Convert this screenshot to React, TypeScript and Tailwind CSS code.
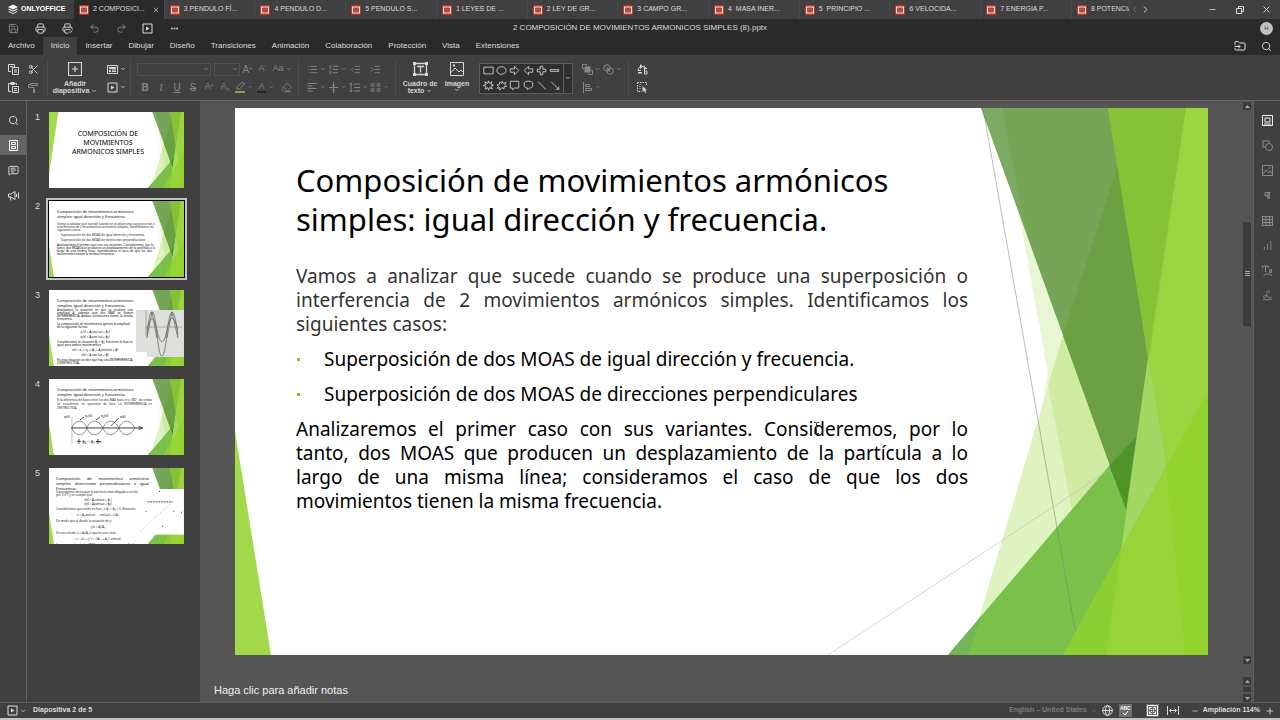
import type { ReactNode } from 'react'
import {
  ChartNoAxesColumnIncreasing, ChevronDown, ChevronLeft, ChevronRight, Ellipsis, Eraser, FolderInput,
  IndentDecrease, IndentIncrease, List, ListOrdered, MessageSquareText, Minus, Pilcrow, Plus, Printer,
  PrinterCheck, Redo2, Save, Scissors, Search, Signature, Undo2, X,
} from 'lucide-react'

const fileTabs = [
  '2 COMPOSICI...', '3 PENDULO FÍ...', '4 PENDULO D...', '5 PENDULO S...', '1 LEYES DE ...', '2 LEY DE GR...',
  '3 CAMPO GR...', '4  MASA INER...', '5  PRINCIPIO ...', '6 VELOCIDA...', '7 ENERGIA P...', '8 POTENCIA',
]

const menuTabs = [
  'Archivo', 'Inicio', 'Insertar', 'Dibujar', 'Diseño', 'Transiciones', 'Animación', 'Colaboración',
  'Protección', 'Vista', 'Extensiones',
]

const i11 = 'w-[11px] h-[11px]'

const Logo = () => (
  <svg className="w-[10px] h-[11px]" viewBox="0 0 20 22" aria-hidden="true">
    <path d="M10 1 20 6 10 11 0 6Z" fill="#fff" />
    <path d="M2.500 9 10 12.800 17.500 9 20 10.300 10 15.500 0 10.300Z" fill="#ddd" />
    <path d="M2.500 14 10 17.800 17.500 14 20 15.300 10 20.500 0 15.300Z" fill="#bbb" />
  </svg>
)

const SlideFileIcon = () => (
  <svg className="w-[10px] h-[10px] shrink-0" viewBox="0 0 10 10" aria-hidden="true">
    <rect width="10" height="10" rx="1" fill="#b5392c" />
    <rect x="1.500" y="2" width="7" height="6" fill="#b9493d" stroke="#f3dedb" />
  </svg>
)

// 11px line icon drawn on an 11x11 grid
const Glyph = ({ d, fill, children }: { d?: string; fill?: string; children?: ReactNode }) => (
  <svg className="w-[11px] h-[11px] shrink-0" viewBox="0 0 11 11" aria-hidden="true">
    {d && <path d={d} fill="none" stroke="currentColor" />}
    {fill && <path d={fill} fill="currentColor" />}
    {children}
  </svg>
)

const PlayBox = () => <Glyph d="M1 1h9v9H1Z" fill="M4 3.500v4l3.500-2Z" />
const LayoutBox = () => <Glyph d="M.5 1.500h10v8H.5ZM5 7.500h4M5 6h4" fill="M2 3h7v2H2ZM2 6h2v2H2Z" />
const CopyIcon = () => <Glyph d="M3 7.500H.5v-7h6V3M4.500 3.500h6v7h-6Z" fill="M2 2h3v1H2ZM6 5.500h3v1H6ZM6 7.500h3v1H6Z" />
const PasteIcon = () => <Glyph d="M3 9.500H.5v-8h8V3M4.500 4.500h6v6h-6Z" fill="M2.500 0h4v3h-4ZM6 6h3v1H6ZM6 8h3v1H6Z" />
const FormatPainter = () => <Glyph d="M2.500 1.500h7v2h-7ZM2.500 2.500h-2v3H6V7" fill="M5 7h2v4H5Z" />
const AlignLeftIcon = () => <Glyph d="M.5 1.500h9M.5 4h5M.5 6.500h9M.5 9h5" />
const VerticalAlign = () => <Glyph d="M1 5.500h9M5.500 0v11M4 2.500 5.500 4 7 2.500M4 8.500 5.500 7 7 8.500" />
const LineSpacing = () => <Glyph d="M2 1v9M.5 2.500 2 1l1.500 1.500M.5 8.500 2 10l1.500-1.500M5 2h6M5 5.500h6M5 9h6" />
const ColumnsIcon = () => <Glyph d="M.5 2h4M.5 4h4M6.500 2h4M6.500 4h4M.5 7h4M.5 9h4M6.500 7h4M6.500 9h4" />
const ArrangeIcon = () => <Glyph d="M2 4.500H.5v-4h4V2M6.500 9v1.500h4v-4H9" fill="M2.500 2.500h6v6h-6Z" />
const AlignObjects = () => <Glyph d="M1.500 0v11M3.500 2.500h4v2h-4ZM3.500 6.500h6v2h-6Z" />
const SelectAll = () => (
  <Glyph fill="M5.500 4v6l1.600-1.300L8.300 11l1-.5-1.100-2.200H10Z">
    <path d="M.5.5h9v3M.5.5v9h4" fill="none" stroke="currentColor" strokeDasharray="1.500 1" />
    <path d="M3 2v6" stroke="currentColor" strokeDasharray="1 1" />
  </Glyph>
)
const ReplaceIcon = () => (
  <Glyph d="M3.500 2.500A4 4 0 0 0 1 6.500M1 6.500h3M7 1.500v3h3M7 2l2 2.500M7.500 5v5h2.500v-3H7.500" fill="M3 0 6 2.500 3 5ZM1 8h4v1.500H1Z" />
)
const CombineIcon = () => (
  <Glyph fill="M4 3.500 7.500 7 7 8 3 4Z">
    <circle cx="4" cy="4" r="3.200" fill="none" stroke="currentColor" />
    <circle cx="7" cy="7" r="3.200" fill="none" stroke="currentColor" />
  </Glyph>
)
const ThumbsIcon = () => <Glyph d="M1.500.5h8v10h-8ZM3.500 2.500h4v2h-4ZM3.500 6.500h4v2h-4Z" />
const FeedbackIcon = () => <Glyph d="M.5 4v3H3l4 2.500v-8L3 4ZM2 7l1 3.500M8.500 4v3M10.500 2.500v6" />
const SlideSettings = () => <Glyph d="M.5.5h10v10H.5ZM3 3h5v4H3ZM2 9h7" />
const PictureSettings = () => <Glyph d="M.5.5h10v10H.5ZM1 9l3-4 2.500 3L8 6l2.500 3M6.500 3h2" />
const TableSettings = () => <Glyph d="M0 1.500h11M0 4.500h11M0 7.500h11M0 10.500h11M.5 1v10M4 1v10M7.500 1v10M10.500 1v10" />
const ShapeSettings = () => (
  <Glyph d="M4 7H1V1h6v2">
    <circle cx="7" cy="7" r="3.500" fill="none" stroke="currentColor" />
  </Glyph>
)
const TextArtSettings = () => <Glyph d="M.5 3V1h6v2M3.500 1v6M7.500 4.500h2v3h-2V6h2M1.500 10.500l3-1.500h3l2.500 1.500" />
const FitSlide = () => (
  <Glyph d="M.5.5h10v10H.5ZM2.500 4.500v-2h2M6.500 2.500h2v2M8.500 6.500v2h-2M4.500 8.500h-2v-2" fill="M4 4h1v1H4ZM6 4h1v1H6ZM4 6h1v1H4ZM6 6h1v1H6Z" />
)
const Globe = () => (
  <Glyph d="M.5 5.500h10">
    <circle cx="5.500" cy="5.500" r="4.800" fill="none" stroke="currentColor" />
    <ellipse cx="5.500" cy="5.500" rx="2" ry="4.800" fill="none" stroke="currentColor" />
  </Glyph>
)

const FitWidth = () => (
  <svg className="w-[12px] h-[9px]" viewBox="0 0 12 9" aria-hidden="true">
    <path d="M.5 0v9M11.500 0v9M2.500 4.500h7M4.500 2.500l-2 2 2 2M7.500 2.500l2 2-2 2" fill="none" stroke="currentColor" />
  </svg>
)

const AddSlideIcon = () => (
  <svg className="w-[14px] h-[14px]" viewBox="0 0 14 14" aria-hidden="true">
    <path d="M.5.5h13v13H.5ZM7 4v6M4 7h6" fill="none" stroke="currentColor" strokeWidth="1.200" />
  </svg>
)

const TextBoxIcon = () => (
  <svg className="w-[15px] h-[14px]" viewBox="0 0 15 14" aria-hidden="true">
    <path d="M1.500 1.500h12v11h-12ZM4.500 5V4.500h6V5M7.500 4.500v6" fill="none" stroke="currentColor" strokeWidth="1.300" />
    <path d="M0 0h3v3H0ZM12 0h3v3h-3ZM0 11h3v3H0ZM12 11h3v3h-3Z" fill="currentColor" />
  </svg>
)

const ImageIcon = () => (
  <svg className="w-[14px] h-[14px]" viewBox="0 0 14 14" aria-hidden="true">
    <path d="M.5.5h13v13H.5ZM.5 11 5 6l4 4 2-2 2.500 2.500" fill="none" stroke="currentColor" />
    <path d="M3 2.500h2v2H3Z" fill="currentColor" />
  </svg>
)

const galleryShapes = [
  { name: 'Rectángulo', d: 'M.5 2.500h11v8H.5Z' },
  { name: 'Elipse', d: 'M6 2C9 2 11.500 4 11.500 6.500S9 11 6 11 .5 9 .5 6.500 3 2 6 2Z' },
  { name: 'Flecha derecha', d: 'M1 4.500h5V1.500l5 5-5 5v-3H1Z' },
  { name: 'Flecha izquierda', d: 'M11 4.500H6V1.500l-5 5 5 5v-3h5Z' },
  { name: 'Más', d: 'M4.500 1.500h3v3.500h3.500v3H7.500v3.500h-3V8H1V5h3.500Z' },
  { name: 'Menos', d: 'M1 5.500h10v2H1Z' },
  { name: 'Explosión 1', d: 'M6 1 7 4 10 2 9 5 12 6 9 7.500 10.500 10.500 7 9 6 12 5 9 2 11 3 7.500 0 6.500 3 5 1.500 2 5 4Z' },
  { name: 'Explosión 2', d: 'M7 1.500 8 4 11.500 3 10 5.500 12 7.500 9 8 9 10.500 6.500 9 4 12 4 9 1 10 2.500 7.500 .5 6 3.500 5 4 2.500 6 4Z' },
  { name: 'Llamada rectangular', d: 'M1 1.500h10v8H6L4 11.500 3.500 9.500H1Z' },
  { name: 'Llamada redondeada', d: 'M3 1.500h6l2 2v4l-2 2H7l-2 2V9.500H3l-2-2v-4Z' },
  { name: 'Línea', d: 'M2 2 11 11' },
  { name: 'Flecha', d: 'M2 2 11 11M11 7.500V11H7.500' },
]

const Facets = ({ cover = false }: { cover?: boolean }) => (
  <svg className="absolute inset-0 w-full h-full" viewBox="0 0 973 547" preserveAspectRatio="none" aria-hidden="true">
    {/* pale facets behind the dark band */}
    <path d="M783 100 828 227 808 292 813 265Z" fill="#e8f6d3" />
    <path d="M828 227 891 402 780 547H733Z" fill="#def3bf" />
    <path d="M828 227 891 402 838 407 813 277Z" fill="#cfeba2" />
    {/* base under the right side, keeps the seams green */}
    <path d="M873 0H973V547H828L891 402Z" fill="#90cb3c" />
    {/* dark band */}
    <path d="M746 0H873L913 250 891 402Z" fill="#76a555" />
    <path d="M746 0H767L790 117Z" fill="#7bab62" />
    <path d="M883 57 913 250 891 402 828 227Z" fill="#6ba143" />
    <path d="M901 329 891 402 874 358Z" fill="#4f9428" />
    {/* lower triangle */}
    <path d="M713 547 874 358 891 402 886 444 828 547Z" fill="#7ac14a" />
    <path d="M713 547 747 507 733 547Z" fill="#73b655" />
    {/* right side */}
    <path d="M873 0H951L913 250Z" fill="#86c236" />
    <path d="M951 0H973V547H871Z" fill="#9ad440" />
    <path d="M913 250 931 358 886 444Z" fill="#a1d863" />
    <path d="M973 283V547H828Z" fill="#93d32e" />
    <path d="M886 444 931 358 950 547H871Z" fill="#96d438" />
    <path d="M886 444 871 547H828Z" fill="#8ccf32" />
    <path d="M748 0 840 522" stroke="#77806f" strokeOpacity=".5" fill="none" />
    <path d="M593 547 874 362" stroke="#bbbbbb" strokeOpacity=".6" fill="none" />
    <path d={cover ? 'M0 0H67L0 450Z' : 'M0 323 36 547H0Z'} fill="#a2d94a" />
  </svg>
)

const Chevron = () => <ChevronDown className="w-[6px] h-[6px] shrink-0" strokeWidth={3} />

type ToolProps = { label: string; width?: string; menu?: boolean; children: ReactNode }

const Tool = ({ label, width = 'w-5', menu = false, children }: ToolProps) => (
  <button aria-label={label} className={`${width} h-[18px] flex items-center justify-center gap-[2px] shrink-0`}>
    {children}
    {menu && <Chevron />}
  </button>
)

const Separator = () => <div className="w-px h-[38px] bg-[#4c4c4c] shrink-0" />

const Toolbar = () => (
  <div className="h-[46px] pt-px flex items-center bg-[#404040] border-b border-[#666] text-[#d6d6d6] shrink-0" role="toolbar">
    <div className="grid grid-cols-2 pl-[3px] mr-1">
      <Tool label="Copiar"><CopyIcon /></Tool>
      <Tool label="Cortar"><Scissors className={i11} /></Tool>
      <Tool label="Pegar"><PasteIcon /></Tool>
      <Tool label="Copiar estilo"><span className="text-[#8a8a8a]"><FormatPainter /></span></Tool>
    </div>
    <Separator />
    <button className="w-[54px] flex flex-col items-center text-[7px] leading-[7px] font-bold">
      <AddSlideIcon />
      <span className="mt-1">Añadir</span>
      <span className="flex items-center gap-[2px]">diapositiva <Chevron /></span>
    </button>
    <div className="w-[28px] flex flex-col items-center">
      <Tool label="Diseño de diapositiva" width="w-6" menu><LayoutBox /></Tool>
      <Tool label="Iniciar presentación" width="w-6" menu><PlayBox /></Tool>
    </div>
    <Separator />
    <div className="w-[161px] ml-[6px] text-[#868686]">
      <div className="flex items-center h-[18px]">
        <div className="relative w-[74px] mr-[3px]">
          <select aria-label="Fuente" className="block w-full h-[13px] appearance-none border border-[#505050] bg-transparent"><option></option></select>
          <span className="absolute right-[2px] top-[3px]"><Chevron /></span>
        </div>
        <div className="relative w-[26px]">
          <select aria-label="Tamaño de fuente" className="block w-full h-[13px] appearance-none border border-[#505050] bg-transparent"><option></option></select>
          <span className="absolute right-[2px] top-[3px]"><Chevron /></span>
        </div>
        <Tool label="Aumentar tamaño" width="w-[15px]"><span className="text-[10px]">A<sup className="text-[6px]">+</sup></span></Tool>
        <Tool label="Reducir tamaño" width="w-[15px]"><span className="text-[9px]">A<sup className="text-[6px]">-</sup></span></Tool>
        <Tool label="Mayúsculas" width="w-[24px]" menu><span className="text-[9px]">Aa</span></Tool>
      </div>
      <div className="flex items-center text-[10px]">
        <Tool label="Negrita" width="w-4"><b>B</b></Tool>
        <Tool label="Cursiva" width="w-4"><i className="font-['Liberation_Serif']">I</i></Tool>
        <Tool label="Subrayado" width="w-4"><u>U</u></Tool>
        <Tool label="Tachado" width="w-4"><s>S</s></Tool>
        <Tool label="Superíndice" width="w-4"><span className="text-[9px]">A<sup className="text-[5px]">x</sup></span></Tool>
        <Tool label="Subíndice" width="w-4"><span className="text-[9px]">A<sub className="text-[5px]">x</sub></span></Tool>
        <Tool label="Color de resaltado" width="w-[22px]" menu>
          <svg className="w-[10px] h-[12px]" viewBox="0 0 10 12" aria-hidden="true">
            <path d="M2 8V6L7.500 1 9.500 3 4.500 8Z" fill="none" stroke="currentColor" />
            <path d="M0 10h10v2H0Z" fill="#9c9c2c" />
          </svg>
        </Tool>
        <Tool label="Color de fuente" width="w-[21px]" menu>
          <span className="text-[9px] leading-[9px] border-b-2 border-[#262626] px-px">A</span>
        </Tool>
        <Tool label="Borrar estilo"><Eraser className={i11} /></Tool>
      </div>
    </div>
    <Separator />
    <div className="w-[84px] ml-[7px] mr-[5px] text-[#868686]">
      <div className="flex">
        <Tool label="Viñetas" width="w-[21px]" menu><List className={`${i11} shrink-0`} /></Tool>
        <Tool label="Numeración" width="w-[21px]" menu><ListOrdered className={`${i11} shrink-0`} /></Tool>
        <Tool label="Reducir sangría" width="w-[15px]"><IndentDecrease className={i11} /></Tool>
        <Tool label="Aumentar sangría" width="w-[24px]"><IndentIncrease className={i11} /></Tool>
      </div>
      <div className="flex">
        <Tool label="Alineación" width="w-[21px]" menu><AlignLeftIcon /></Tool>
        <Tool label="Alineación vertical" width="w-[21px]" menu><VerticalAlign /></Tool>
        <Tool label="Interlineado" width="w-[21px]" menu><LineSpacing /></Tool>
        <Tool label="Columnas" width="w-[21px]" menu><ColumnsIcon /></Tool>
      </div>
    </div>
    <Separator />
    <button className="w-[48px] flex flex-col items-center text-[7px] leading-[7px] font-bold">
      <TextBoxIcon />
      <span className="mt-1">Cuadro de</span>
      <span className="flex items-center gap-[2px]">texto <Chevron /></span>
    </button>
    <button className="w-[26px] flex flex-col items-center text-[7px] leading-[7px] font-bold">
      <ImageIcon />
      <span className="mt-1">Imagen</span>
      <span className="h-[7px]"><Chevron /></span>
    </button>
    <div className="flex h-[31px] w-[94px] ml-[9px] border border-[#5c5c5c] bg-[#2f2f2f]">
      <div className="flex-1 grid grid-cols-6 place-items-center px-[2px]">
        {galleryShapes.map((shape) => (
          <button key={shape.name} aria-label={shape.name}>
            <svg className="w-[11px] h-[11px] block" viewBox="0 0 12 13" aria-hidden="true">
              <path d={shape.d} fill="none" stroke="currentColor" />
            </svg>
          </button>
        ))}
      </div>
      <button aria-label="Más formas" className="w-[9px] flex items-center justify-center border-l border-[#5c5c5c]"><Chevron /></button>
    </div>
    <div className="ml-[8px] mr-[3px] w-[44px] text-[#868686]">
      <div className="flex">
        <Tool label="Organizar" width="w-[21px]" menu><ArrangeIcon /></Tool>
        <Tool label="Combinar formas" width="w-[21px]" menu><CombineIcon /></Tool>
      </div>
      <Tool label="Alinear" width="w-[21px]" menu><AlignObjects /></Tool>
    </div>
    <Separator />
    <div className="ml-[3px]">
      <Tool label="Reemplazar"><ReplaceIcon /></Tool>
      <Tool label="Seleccionar todo"><SelectAll /></Tool>
    </div>
  </div>
)

// Justified single line, used where the break points are fixed
const Line = ({ children }: { children: ReactNode }) => (
  <span className="block whitespace-nowrap [text-align-last:justify]">{children}</span>
)

const TinyTitle = () => (
  <p className="text-[4px] leading-[5px] text-black whitespace-nowrap">
    Composición de movimientos armónicos<br />simples: igual dirección y frecuencia.
  </p>
)

const Thumb1 = () => (
  <p className="relative pt-[17px] w-[118px] text-center text-[7px] leading-[9px] text-black whitespace-nowrap">
    COMPOSICIÓN DE<br />MOVIMIENTOS<br />ARMONICOS SIMPLES
  </p>
)

const Thumb2 = () => (
  <div className="relative pl-2 pt-[8px] w-[103px] text-[3px] leading-[3px] text-[#222]">
    <TinyTitle />
    <p className="mt-1">
      <Line>Vamos a analizar que sucede cuando se produce una superposición o</Line>
      <Line>interferencia de 2 movimientos armónicos simples. Identificamos los</Line>
      siguientes casos:
    </p>
    <p className="mt-[2px] pl-1">Superposición de dos MOAS de igual dirección y frecuencia.</p>
    <p className="mt-[2px] pl-1">Superposición de dos MOAS de direcciones perpendiculares</p>
    <p className="mt-[2px] text-black">
      <Line>Analizaremos el primer caso con sus variantes. Consideremos, por lo</Line>
      <Line>tanto, dos MOAS que producen un desplazamiento de la partícula a lo</Line>
      <Line>largo de una misma línea; consideramos el caso de que los dos</Line>
      movimientos tienen la misma frecuencia.
    </p>
  </div>
)

const Thumb3 = () => (
  <>
    <div className="relative pl-2 pt-[8px] w-[84px] text-[3px] leading-[3px] text-black">
      <TinyTitle />
      <p className="mt-px text-justify">Analizamos la situación en que se produce una amplitud A, además que dos MAS se llaman INTERFERENCIA. Ambas oscilaciones tienen la misma frecuencia.</p>
      <p className="mt-[2px]">La composición de movimientos genera la amplitud de la siguiente forma:</p>
      <p className="mt-[2px] text-center">x₁(t) = A₁sen (ωt + φ₁)</p>
      <p className="mt-[2px] text-center">x₂(t) = A₂sen (ωt + φ₂)</p>
      <p className="mt-[2px]">Consideramos la situación φ₁ = φ₂. Entonces la fase es igual para ambos movimientos:</p>
      <p className="mt-[2px] text-center">x(t) = x₁ + x₂ = (A₁ + A₂)sen(ωt + φ)</p>
      <p className="mt-[2px] text-center">x(t) = A sen (ωt + φ)</p>
      <p className="mt-[2px]">En esta situación se dice que hay una INTERFERENCIA CONSTRUCTIVA.</p>
    </div>
    <svg className="absolute left-[64.500%] top-[26%] w-[35.500%] h-[62%]" viewBox="0 0 48 47" preserveAspectRatio="none" aria-hidden="true">
      <rect width="48" height="47" fill="#dcdfda" />
      <path d="M0 42h11v5H0Z" fill="#fff" />
      <path d="M11 25C14-6 18-6 21 24S28 53 31 24 38-6 42 25M11 20C14 5 18 5 21 20S28 36 31 20 38 5 42 20M11 28 16 2 21 28M31 28 36 2 42 28" fill="none" stroke="#5a5a5a" strokeWidth=".7" />
      <path d="M10 17h36M10 0v26" stroke="#777" strokeWidth=".5" />
    </svg>
  </>
)

const Thumb4 = () => (
  <>
    <div className="relative pl-2 pt-[8px] w-[103px] text-[3px] leading-[4px] text-[#222]">
      <TinyTitle />
      <p className="mt-px text-justify">Si la diferencia de fases entre los dos MAS fuera π o 180°, las ondas se encuentran en oposición de fase. La INTERFERENCIA es DESTRUCTIVA.</p>
    </div>
    <svg className="absolute left-[10%] top-[46%] w-[62%] h-[42%]" viewBox="0 0 84 32" aria-hidden="true">
      <path d="M9 3v27" stroke="#999" strokeWidth=".6" />
      <path d="M8 14h70M76 12.500 80 14l-4 1.500" stroke="#111" strokeWidth=".8" fill="none" />
      <path d="M9 14C12 5 21 5 24 14S36 23 40 14 52 5 56 14 68 23 72 14M9 14C12 23 21 23 24 14S36 5 40 14 52 23 56 14 68 5 72 14" fill="none" stroke="#444" strokeWidth=".6" />
      <path d="M21 3 17 6M37 3 33 6M56 4 48 12" stroke="#222" strokeWidth=".8" />
      <path d="M16 25v5M35 25v5M14 27.500h4M33 27.500h4" stroke="#222" strokeWidth=".8" />
      <text x="1" y="4" fontSize="4">x(t)</text>
      <text x="22" y="3" fontSize="4">x₁(t)</text>
      <text x="38" y="3" fontSize="4">x₂(t)</text>
      <text x="57" y="4" fontSize="4">x(t)</text>
      <text x="19" y="29" fontSize="4">φ₂ − φ₁ = π</text>
    </svg>
  </>
)

const Thumb5 = () => (
  <>
    <div className="relative pl-[7px] pt-[8px] w-[100px]">
      <p className="text-[4px] leading-[5px] text-black">
        <Line>Composición de movimientos armónicos</Line>
        <Line>simples: direcciones perpendiculares e igual</Line>
        frecuencia.
      </p>
      <div className="w-[84px] text-[3px] leading-[3px] text-[#222]">
        <p>Supongamos ahora que la partícula está obligada a oscilar por X e Y y se cumple que:</p>
        <p className="mt-[2px] text-center text-black">x(t) = A₁sen(ωt + φ₁)</p>
        <p className="mt-px text-center text-black">y(t) = A₂sen(ωt + φ₂)</p>
        <p className="mt-[2px]">Consideremos que estén en fase, o φ₁ = φ₂ = 0. Entonces:</p>
        <p className="mt-[3px] text-center">x = A₁sen(ωt) → sen(ωt) = x/A₁</p>
        <p className="mt-[3px]">De modo que al dividir la ecuación de y:</p>
        <p className="mt-[3px] text-center">y/x = A₂/A₁</p>
        <p className="mt-[3px]">De otro modo: y = A₂/A₁ x que es una recta.</p>
        <p className="mt-[3px] text-center">r = √(x² + y²) = √(A₁² + A₂²) sen(ωt)</p>
        <p className="mt-[3px] text-black whitespace-nowrap">La composición de dos MAS en direcciones perpendiculares</p>
      </div>
    </div>
    <svg className="absolute left-[66%] top-[28%] w-[34%] h-[60%]" viewBox="0 0 48 46" preserveAspectRatio="none" aria-hidden="true">
      <rect x="4" width="44" height="46" fill="#fff" />
      <path d="M10 13h26" stroke="#222" strokeWidth=".8" strokeDasharray="2 .8" />
      <path d="M2 43 37 12" stroke="#999" strokeWidth=".6" strokeDasharray="2 2" />
      <path d="M22 2h1v1h-1ZM8 22h1v1H8ZM37 22h1v1h-1ZM25 37h1v1h-1ZM45 23h1v1h-1Z" fill="#333" />
    </svg>
  </>
)

const thumbs = [Thumb1, Thumb2, Thumb3, Thumb4, Thumb5]

const bullets = [
  'Superposición de dos MOAS de igual dirección y frecuencia.',
  'Superposición de dos MOAS de direcciones perpendiculares',
]

const Slide = () => (
  <article className="relative w-full aspect-[973/547] bg-white overflow-hidden font-['Noto_Sans',sans-serif] text-black">
    <Facets />
    <div className="relative pl-[61px] pt-[53px] w-[733px]">
      <h1 className="text-[31px] leading-[39px] whitespace-nowrap">
        Composición de movimientos armónicos<br />simples: igual dirección y frecuencia.
      </h1>
      <div className="mt-[25px] flex flex-col gap-[11px] text-[19px] leading-[24px]">
        <p className="text-[#333]">
          <Line>Vamos a analizar que sucede cuando se produce una superposición o</Line>
          <Line>interferencia de 2 movimientos armónicos simples. Identificamos los</Line>
          siguientes casos:
        </p>
        <ul className="flex flex-col gap-[11px] whitespace-nowrap">
          {bullets.map((item) => (
            <li key={item} className="flex items-center">
              <span className="w-[28px]"><span className="block ml-px w-[3px] h-[3px] bg-[#90c226]" /></span>
              {item}
            </li>
          ))}
        </ul>
        <p>
          <Line>Analizaremos el primer caso con sus variantes. Consideremos, por lo</Line>
          <Line>tanto, dos MOAS que producen un desplazamiento de la partícula a lo</Line>
          <Line>largo de una misma línea; consideramos el caso de que los dos</Line>
          movimientos tienen la misma frecuencia.
        </p>
      </div>
    </div>
    {/* text cursor */}
    <svg className="absolute left-[578px] top-[314px] w-[7px] h-[12px]" viewBox="0 0 7 12" aria-hidden="true">
      <path d="M1 .5h2l.5.5.5-.5h2M3.500 1v10M1 11.500h2l.5-.5.5.5h2" fill="none" stroke="#444" />
    </svg>
  </article>
)

const ScrollArrow = ({ up = false }: { up?: boolean }) => (
  <button aria-label={up ? 'Subir' : 'Bajar'} className="w-[8px] h-[8px] shrink-0 bg-[#3c3c3c] flex items-center justify-center">
    <svg className="w-[5px] h-[3px]" viewBox="0 0 5 3" aria-hidden="true">
      <path d={up ? 'M0 3 2.500 0 5 3Z' : 'M0 0 2.500 3 5 0Z'} fill="#aaa" />
    </svg>
  </button>
)

const leftRail = [
  { label: 'Buscar', icon: <Search className={i11} /> },
  { label: 'Diapositivas', icon: <ThumbsIcon />, active: true },
  { label: 'Comentarios', icon: <MessageSquareText className={i11} /> },
  { label: 'Comentarios y soporte', icon: <FeedbackIcon /> },
]

const rightRail = [
  { label: 'Ajustes de diapositiva', icon: <SlideSettings />, active: true },
  { label: 'Ajustes de forma', icon: <ShapeSettings /> },
  { label: 'Ajustes de imagen', icon: <PictureSettings /> },
  { label: 'Ajustes de párrafo', icon: <Pilcrow className="w-[9px] h-[9px]" strokeWidth={3} /> },
  { label: 'Ajustes de tabla', icon: <TableSettings /> },
  { label: 'Ajustes de gráfico', icon: <ChartNoAxesColumnIncreasing className={i11} /> },
  { label: 'Ajustes de Text Art', icon: <TextArtSettings /> },
  { label: 'Ajustes de firma', icon: <Signature className={i11} /> },
]

const App = () => {
  return (
    <div className="h-screen flex flex-col overflow-hidden bg-[#404040] text-[#dcdcdc] font-['Liberation_Sans',Arial,sans-serif] text-[8px]">
      {/* Window tabs */}
      <div className="h-[19px] flex items-stretch text-[7px] shrink-0">
        <button className="w-[74px] flex items-center gap-[3px] pl-2 font-bold text-white">
          <Logo /> ONLYOFFICE
        </button>
        <div className="flex-1 flex min-w-0" role="tablist">
          {fileTabs.map((tab, i) => (
            <button
              key={tab}
              role="tab"
              aria-selected={i === 0}
              className={`min-w-0 flex items-center gap-1 pl-[5px] overflow-hidden whitespace-pre border-r border-[#4a4a4a] ${i === 11 ? 'flex-[56]' : 'flex-[91]'} ${i === 0 ? 'bg-[#2a2a2a]' : ''}`}
            >
              <SlideFileIcon />
              <span>{tab}</span>
              {i === 0 && <X className="w-2 h-2 ml-auto mr-1" />}
            </button>
          ))}
        </div>
        <div className="w-[150px] flex items-center">
          <button aria-label="Pestañas anteriores" className="w-[10px] text-[#777]"><ChevronLeft className="w-[9px] h-[9px]" /></button>
          <button aria-label="Pestañas siguientes"><ChevronRight className={i11} /></button>
          <button aria-label="Minimizar" className="ml-auto w-[27px] flex justify-center"><Minus className="w-[9px] h-[9px]" /></button>
          <button aria-label="Restaurar" className="w-[27px] flex justify-center">
            <svg className="w-2 h-2" viewBox="0 0 8 8" aria-hidden="true">
              <path d="M.5 2.500h5v5h-5ZM2.500 2.500v-2h5v5h-2" fill="none" stroke="currentColor" />
            </svg>
          </button>
          <button aria-label="Cerrar" className="w-[27px] flex justify-center"><X className="w-[11px] h-[11px]" /></button>
        </div>
      </div>

      {/* Title and menu */}
      <header className="bg-[#2a2a2a] shrink-0">
        <div className="h-[18px] flex items-center">
          <div className="flex-1 flex">
            <Tool label="Guardar" width="w-[27px]"><Save className={`${i11} text-[#8a8a8a]`} /></Tool>
            <Tool label="Imprimir" width="w-[27px]"><Printer className={i11} /></Tool>
            <Tool label="Impresión rápida" width="w-[27px]"><PrinterCheck className={i11} /></Tool>
            <Tool label="Deshacer" width="w-[27px]"><Undo2 className={`${i11} text-[#8a8a8a]`} /></Tool>
            <Tool label="Rehacer" width="w-[26px]"><Redo2 className={`${i11} text-[#8a8a8a]`} /></Tool>
            <Tool label="Iniciar presentación" width="w-[27px]"><PlayBox /></Tool>
            <Tool label="Personalizar" width="w-[26px]"><Ellipsis className="w-[9px] h-[9px]" strokeWidth={3} /></Tool>
          </div>
          <h2>2 COMPOSICIÓN DE MOVIMIENTOS ARMONICOS SIMPLES (8).pptx</h2>
          <div className="flex-1 flex justify-end">
            <span className="w-[13px] h-[13px] mr-[7px] rounded-full bg-[#c2c2c2] text-[#444] text-[6px] leading-[13px] text-center">H</span>
          </div>
        </div>
        <nav className="h-[18px] flex">
          {menuTabs.map((tab) => (
            <button key={tab} className={`px-2 ${tab === 'Inicio' ? 'bg-[#404040]' : ''}`}>{tab}</button>
          ))}
          <div className="ml-auto flex">
            <Tool label="Abrir ubicación" width="w-[27px]"><FolderInput className="w-3 h-3" /></Tool>
            <Tool label="Buscar" width="w-[27px]"><Search className={i11} /></Tool>
          </div>
        </nav>
      </header>

      <Toolbar />

      <div className="flex-1 min-h-0 flex">
        <aside className="w-[27px] pt-[9px] flex flex-col gap-[5px] border-r border-[#606060] shrink-0">
          {leftRail.map((item) => (
            <button key={item.label} aria-label={item.label} className={`h-[20px] flex items-center justify-center ${item.active ? 'bg-[#666] text-white' : ''}`}>
              {item.icon}
            </button>
          ))}
        </aside>

        <ol className="w-[173px] pt-[11px] pl-2 flex flex-col gap-[13px] shrink-0 font-['Noto_Sans',sans-serif]">
          {thumbs.map((Thumb, i) => (
            <li key={i} className="flex">
              <span className="w-[14px] text-[9px] leading-[10px] font-['Liberation_Sans']">{i + 1}</span>
              <div className={`relative w-[135px] h-[76px] bg-white ${i === 1 ? 'ring-1 ring-black outline-2 outline-offset-1 outline-[#c4c4c4]' : ''}`}>
                <div className="absolute inset-0 overflow-hidden">
                  <Facets cover={i === 0} />
                  <Thumb />
                </div>
              </div>
            </li>
          ))}
        </ol>

        <main className="flex-1 min-w-0 flex flex-col bg-[#555]">
          <div className="flex-1 min-h-0 flex">
            <div className="flex-1 min-w-0 pt-[7px] pl-[35px] pr-[35px]">
              <Slide />
            </div>
            <div className="w-[10px] flex flex-col justify-between py-px">
              <ScrollArrow up />
              <div className="w-[8px] h-[104px] mb-[219px] bg-[#3c3c3c] flex flex-col items-center justify-center gap-px">
                <span className="w-[5px] h-px bg-[#aaa]" />
                <span className="w-[5px] h-px bg-[#aaa]" />
                <span className="w-[5px] h-px bg-[#aaa]" />
              </div>
              <ScrollArrow />
            </div>
          </div>
          <div className="h-[36px] flex mt-px">
            <div className="flex-1 pt-[16px] pl-[14px]">
              <input aria-label="Notas" placeholder="Haga clic para añadir notas" className="block w-full h-[16px] text-[11px] bg-transparent outline-none placeholder:text-[#f0f0f0] placeholder:opacity-100" />
            </div>
            <div className="w-[10px] flex flex-col justify-between pt-[11px]">
              <ScrollArrow up />
              <span className="w-[8px] h-[5px] bg-[#3c3c3c]" />
              <ScrollArrow />
            </div>
          </div>
        </main>

        <aside className="w-[27px] pt-[9px] flex flex-col gap-[5px] border-l border-[#606060] shrink-0">
          {rightRail.map((item) => (
            <button key={item.label} aria-label={item.label} className={`h-[20px] flex items-center justify-center ${item.active ? 'text-[#eee]' : 'text-[#8a8a8a]'}`}>
              {item.icon}
            </button>
          ))}
        </aside>
      </div>

      {/* Status bar */}
      <footer className="h-[18px] flex items-center border-t border-b-2 border-t-[#5a5a5a] border-b-[#c4c4c4] text-[7px] font-bold shrink-0">
        <Tool label="Iniciar presentación" width="w-[33px]" menu><PlayBox /></Tool>
        <span>Diapositiva 2 de 5</span>
        <button className="ml-auto flex items-center gap-1 text-[#7c7c7c]">English – United States <Chevron /></button>
        <Tool label="Idioma" width="w-[22px]"><Globe /></Tool>
        <button aria-label="Ortografía" className="w-[13px] h-[13px] flex flex-col items-center justify-center bg-[#6e6e6e] text-white">
          <span className="text-[5px] leading-[5px]">ABC</span>
          <svg className="w-[7px] h-[5px]" viewBox="0 0 7 5" aria-hidden="true"><path d="M1 2l2 2 3-4" fill="none" stroke="currentColor" /></svg>
        </button>
        <button aria-label="Ajustar a la diapositiva" className="w-[13px] h-[13px] ml-[14px] flex items-center justify-center bg-[#6e6e6e] text-white"><FitSlide /></button>
        <Tool label="Ajustar al ancho" width="w-[28px]"><FitWidth /></Tool>
        <Tool label="Alejar" width="w-[16px]"><Minus className="w-2 h-2" /></Tool>
        <span>Ampliación 114%</span>
        <Tool label="Acercar" width="w-[20px]"><Plus className="w-[10px] h-[10px]" /></Tool>
      </footer>
    </div>
  )
}

export default App
